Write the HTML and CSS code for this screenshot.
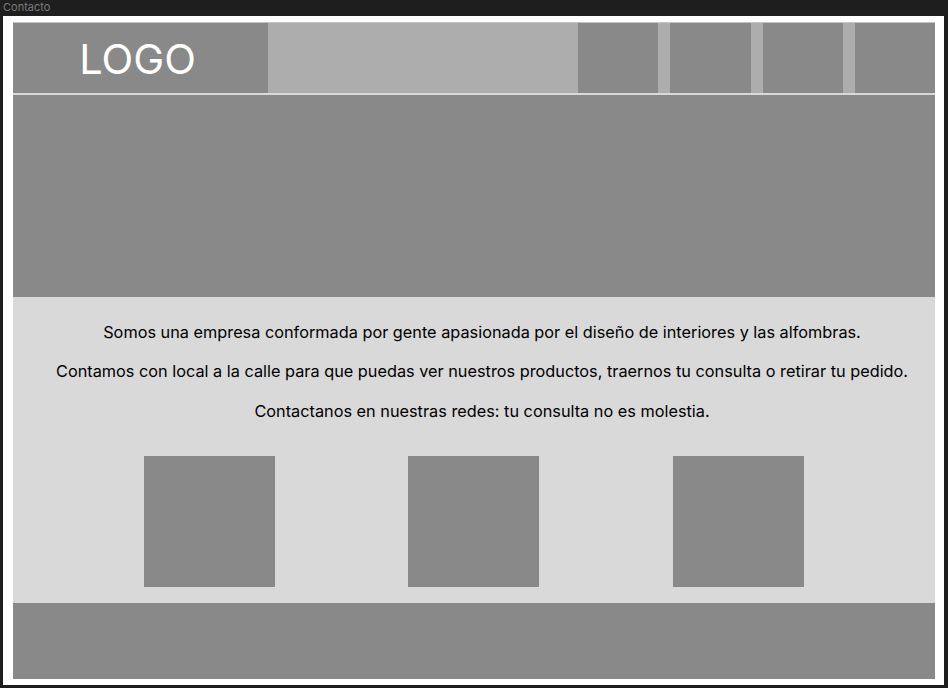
FILE: index.html
```html
<!DOCTYPE html>
<html lang="es">
<head>
<meta charset="utf-8">
<title>Contacto</title>
<link rel="stylesheet" href="styles.css">
</head>
<body>
<div class="label">Contacto</div>
<div class="frame">
  <div class="page">
    <header class="header">
      <div class="logo">LOGO</div>
      <div class="spacer"></div>
      <nav class="nav">
        <div class="nav-item"></div>
        <div class="nav-item"></div>
        <div class="nav-item"></div>
        <div class="nav-item"></div>
      </nav>
    </header>
    <section class="hero"></section>
    <section class="content">
      <div class="text">
        <p>Somos una empresa conformada por gente apasionada por el diseño de interiores y las alfombras.</p>
        <p>Contamos con local a la calle para que puedas ver nuestros productos, traernos tu consulta o retirar tu pedido.</p>
        <p>Contactanos en nuestras redes: tu consulta no es molestia.</p>
      </div>
      <div class="socials">
        <div class="social"></div>
        <div class="social"></div>
        <div class="social"></div>
      </div>
    </section>
    <footer class="footer"></footer>
  </div>
</div>
</body>
</html>
```

FILE: styles.css
```css
* { box-sizing: border-box; }
html, body {
  margin: 0;
  padding: 0;
}
body {
  width: 948px;
  height: 688px;
  background: #1e1e1e;
  font-family: Inter, "Noto Sans", sans-serif;
  overflow: hidden;
}
.label {
  height: 16px;
  line-height: 15px;
  padding-left: 3px;
  font-size: 11px;
  color: #7c7c7c;
}
.frame {
  margin-left: 3px;
  width: 941px;
  height: 669px;
  background: #ffffff;
  padding: 6px 9px 6px 10px;
}
.page {
  width: 922px;
  height: 657px;
  display: flex;
  flex-direction: column;
}
.header {
  height: 73px;
  display: flex;
  background: #adadad;
  border-top: 1px solid #c4c4c4;
  border-bottom: 2px solid #d9d9d9;
}
.logo {
  width: 255px;
  background: #898989;
  color: #ffffff;
  font-size: 41.5px;
  display: flex;
  align-items: center;
  justify-content: center;
  padding-right: 6px;
  padding-top: 2px;
}
.spacer {
  width: 310px;
}
.nav {
  flex: 1;
  display: flex;
  gap: 12px;
}
.nav-item {
  flex: 1;
  background: #898989;
}
.hero {
  height: 202px;
  background: #898989;
}
.content {
  height: 306px;
  background: #d9d9d9;
  padding-top: 25.5px;
}
.text {
  display: flex;
  flex-direction: column;
  gap: 20px;
  padding-left: 16px;
  text-align: center;
  font-size: 16.3px;
  line-height: 19.5px;
  color: #000000;
}
.text p { margin: 0; }
.socials {
  margin-top: 34.5px;
  padding-right: 1px;
  display: flex;
  justify-content: center;
  gap: 133.5px;
}
.social {
  width: 131px;
  height: 131px;
  background: #898989;
}
.footer {
  flex: 1;
  background: #898989;
}
```
